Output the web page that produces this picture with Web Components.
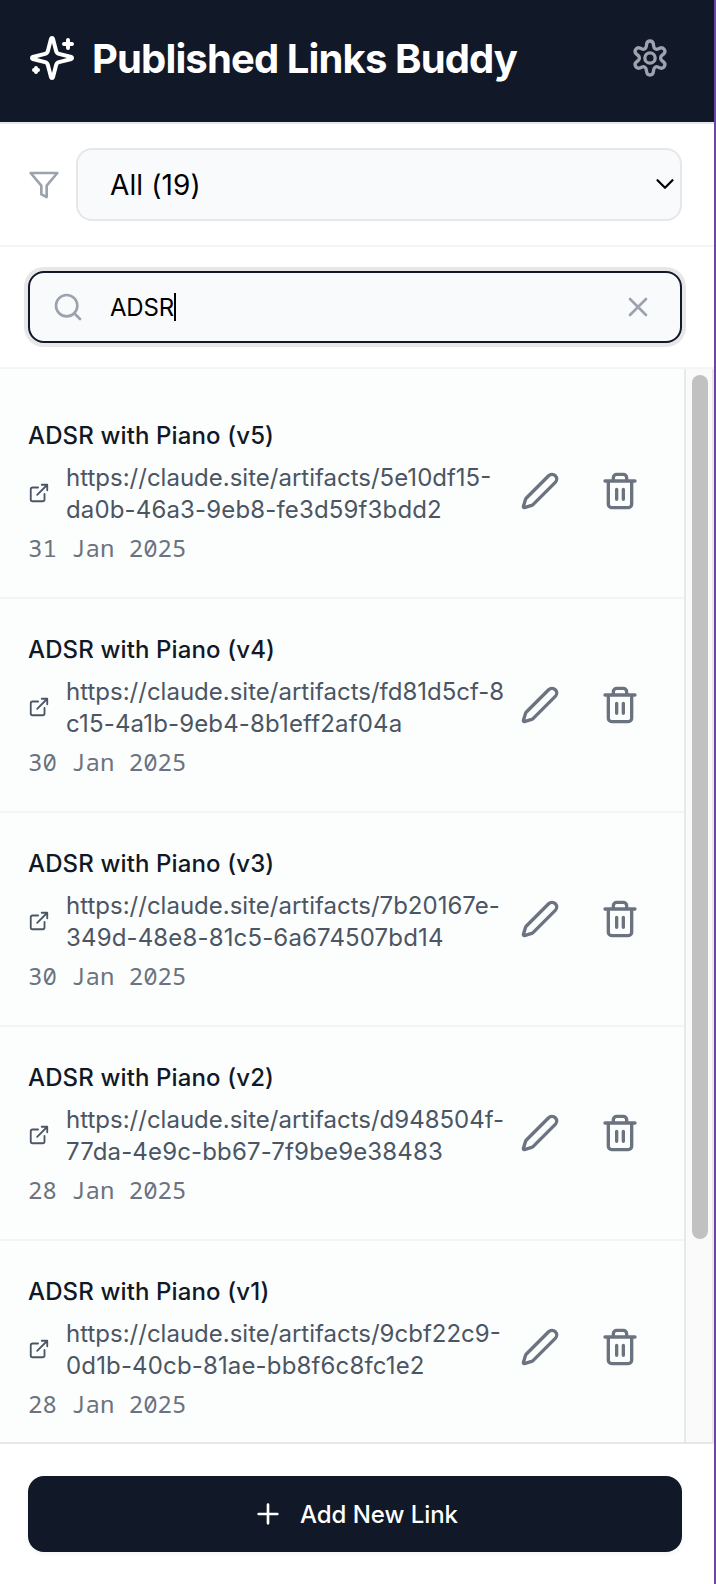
<!DOCTYPE html>
<html lang="en"><head><meta charset="utf-8"><title>Published Links Buddy</title>
<style>
html,body{margin:0;height:100%}
body{font-family:Inter,"Liberation Sans",sans-serif;overflow:hidden}
</style></head><body>
<links-app></links-app>
<script>
const ICONS={
sparkles:'<path d="M9.937 15.5A2 2 0 0 0 8.5 14.063l-6.135-1.582a.5.5 0 0 1 0-.962L8.5 9.936A2 2 0 0 0 9.937 8.5l1.582-6.135a.5.5 0 0 1 .963 0L14.063 8.5A2 2 0 0 0 15.5 9.937l6.135 1.581a.5.5 0 0 1 0 .964L15.5 14.063a2 2 0 0 0-1.437 1.437l-1.582 6.135a.5.5 0 0 1-.963 0z"/><path d="M20 3v4M22 5h-4M4 17v2M5 18H3"/>',
gear:'<path d="M10 3.65C10.3 1.2 13.7 1.2 14 3.65L14.25 5.1C14.45 6.4 15.6 7.05 16.8 6.55L18 6.05C20.3 5.2 22 8.15 20.1 9.65L19.15 10.4C18.1 11.25 18.1 12.75 19.15 13.6L20.1 14.35C22 15.85 20.3 18.8 18 17.95L16.8 17.45C15.6 16.95 14.45 17.6 14.25 18.9L14 20.35C13.7 22.8 10.3 22.8 10 20.35L9.75 18.9C9.55 17.6 8.4 16.95 7.2 17.45L6 17.95C3.7 18.8 2 15.85 3.9 14.35L4.85 13.6C5.9 12.75 5.9 11.25 4.85 10.4L3.9 9.65C2 8.15 3.7 5.2 6 6.05L7.2 6.55C8.4 7.05 9.55 6.4 9.75 5.1Z"/><circle cx="12" cy="12" r="3.1"/>',
filter:'<path d="M22 3H2l8 9.46V19l4 2v-8.54z"/>',
search:'<circle cx="11" cy="11" r="8"/><path d="m21 21-4.3-4.3"/>',
x:'<path d="M18 6 6 18M6 6l12 12"/>',
chevron:'<path d="m6 9 6 6 6-6"/>',
external:'<path d="M15 3h6v6M10 14 21 3M18 13v6a2 2 0 0 1-2 2H5a2 2 0 0 1-2-2V8a2 2 0 0 1 2-2h6"/>',
pencil:'<path d="M21.174 6.812a1 1 0 0 0-3.986-3.987L3.842 16.174a2 2 0 0 0-.5.83l-1.321 4.352a.5.5 0 0 0 .623.622l4.353-1.32a2 2 0 0 0 .83-.497z"/>',
trash:'<path d="M3 6h18M19 6v14a2 2 0 0 1-2 2H7a2 2 0 0 1-2-2V6M8 6V4a2 2 0 0 1 2-2h4a2 2 0 0 1 2 2v2M10 11v6M14 11v6"/>',
plus:'<path d="M5 12h14M12 5v14"/>'};
function define(name,render){customElements.define(name,class extends HTMLElement{
constructor(){super();this.attachShadow({mode:'open'})}
connectedCallback(){this.shadowRoot.innerHTML=render(this)}})}

define('ui-icon',el=>`<style>:host{display:block;flex:none}svg{display:block;fill:none;stroke:currentColor;stroke-linecap:round;stroke-linejoin:round}</style>
<svg width="${el.getAttribute('size')}" height="${el.getAttribute('size')}" viewBox="0 0 24 24" stroke-width="${el.getAttribute('stroke')||2}">${ICONS[el.getAttribute('name')]}</svg>`);

define('app-header',()=>`<style>:host{display:flex;align-items:center;box-sizing:border-box;height:124px;padding:0 44px 6px 28px;background:#111827;border-bottom:2px solid #e5e7eb;color:#fff}
h1{flex:1;margin:2px 0 0 16px;font-size:40px;font-weight:650;letter-spacing:-.87px;line-height:56px;white-space:nowrap}
.gear{color:#9ca3af}</style>
<ui-icon name="sparkles" size="48"></ui-icon><h1><slot></slot></h1><ui-icon class="gear" name="gear" size="40"></ui-icon>`);

define('filter-bar',()=>`<style>:host{display:flex;align-items:center;gap:16px;box-sizing:border-box;height:123px;padding:0 32px 0 28px;border-bottom:2px solid #f3f4f6;color:#9ca3af}
.box{flex:1;display:flex;align-items:center;justify-content:space-between;box-sizing:border-box;height:73px;border:2px solid #e5e7eb;border-radius:16px;background:#f9fafb;padding:0 0 0 32px;color:#000;font-size:28px;letter-spacing:.1px}
.box ui-icon{margin-top:-2px}</style>
<ui-icon name="filter" size="32"></ui-icon><div class="box"><span><slot></slot></span><ui-icon name="chevron" size="30" stroke="1.75"></ui-icon></div>`);

define('search-bar',()=>`<style>:host{display:flex;align-items:center;box-sizing:border-box;height:122px;padding:0 32px 0 28px;border-bottom:2px solid #f3f4f6;color:#9ca3af}
.box{flex:1;display:flex;align-items:center;box-sizing:border-box;height:72px;border:2px solid #111827;border-radius:16px;background:#f9fafb;padding:0 26px 0 22px;box-shadow:0 0 0 4px #e7e7e9}
.text{flex:1;display:flex;align-items:center;margin-left:26px;color:#000;font-size:24px;letter-spacing:-.2px}
.caret{width:2px;height:28px;background:#000}</style>
<div class="box"><ui-icon name="search" size="32"></ui-icon><div class="text"><span><slot></slot></span><i class="caret"></i></div><ui-icon name="x" size="32"></ui-icon></div>`);

define('link-row',el=>`<style>:host{display:flex;box-sizing:border-box;height:214px;padding:32px 44px 0 28px;border-bottom:2px solid #f3f4f6}
.info{width:486px}
.title{color:#111827;font-size:24px;font-weight:500;line-height:38px;letter-spacing:.13px}
.link{display:flex;align-items:center;gap:16px;color:#4b5563;font-size:24px;line-height:32px;margin-top:7px;white-space:nowrap}
.link ui-icon{margin-top:-2px}
.b{letter-spacing:.15px}
.date{color:#6b7280;font:24px/32px "Noto Sans Mono","DejaVu Sans Mono",monospace;margin-top:6px}
.actions{display:flex;gap:40px;margin:54px 0 0 6px;color:#6b7280}</style>
<div class="info"><div class="title"><slot></slot></div><div class="link"><ui-icon name="external" size="22"></ui-icon><div><div class="a">${el.getAttribute('line1')}</div><div class="b">${el.getAttribute('line2')}</div></div></div><div class="date">${el.getAttribute('date')}</div></div>
<div class="actions"><ui-icon name="pencil" size="40"></ui-icon><ui-icon name="trash" size="40"></ui-icon></div>`);

define('link-list',()=>`<style>:host{display:flex;height:1073px;background:#fcfefd;overflow:hidden}
.rows{width:684px;padding-top:16px}
.track{box-sizing:border-box;width:30px;border:solid #e8e8e8;border-width:0 2px;background:#fafafa;padding:6px 4px 0 6px}
.thumb{width:16px;height:864px;border-radius:8px;background:#c1c1c1}</style>
<div class="rows"><slot></slot></div><div class="track"><div class="thumb"></div></div>`);

define('add-footer',()=>`<style>:host{display:block;box-sizing:border-box;height:142px;border-top:2px solid #e5e7eb;padding:32px 32px 0 28px}
button{display:flex;align-items:center;justify-content:center;gap:16px;width:100%;height:76px;border:0;border-radius:16px;background:#111827;color:#fff;font:500 24px Inter,sans-serif;letter-spacing:-.05px;padding:0;box-shadow:0 2px 4px #0000000d}</style>
<button><ui-icon name="plus" size="32"></ui-icon><span><slot></slot></span></button>`);

const links=[['v5','5e10df15-','da0b-46a3-9eb8-fe3d59f3bdd2','31'],['v4','fd81d5cf-8','c15-4a1b-9eb4-8b1eff2af04a','30'],['v3','7b20167e-','349d-48e8-81c5-6a674507bd14','30'],['v2','d948504f-','77da-4e9c-bb67-7f9be9e38483','28'],['v1','9cbf22c9-','0d1b-40cb-81ae-bb8f6c8fc1e2','28']];
define('links-app',()=>`<style>:host{display:block;box-sizing:border-box;width:716px;height:1584px;border-right:2px solid #6b46a3;background:#fff}</style>
<app-header>Published Links Buddy</app-header><filter-bar>All (19)</filter-bar><search-bar>ADSR</search-bar>
<link-list>${links.map(([v,a,b,d])=>`<link-row line1="https://claude.site/artifacts/${a}" line2="${b}" date="${d} Jan 2025">ADSR with Piano (${v})</link-row>`).join('')}</link-list>
<add-footer>Add New Link</add-footer>`);
</script></body></html>
